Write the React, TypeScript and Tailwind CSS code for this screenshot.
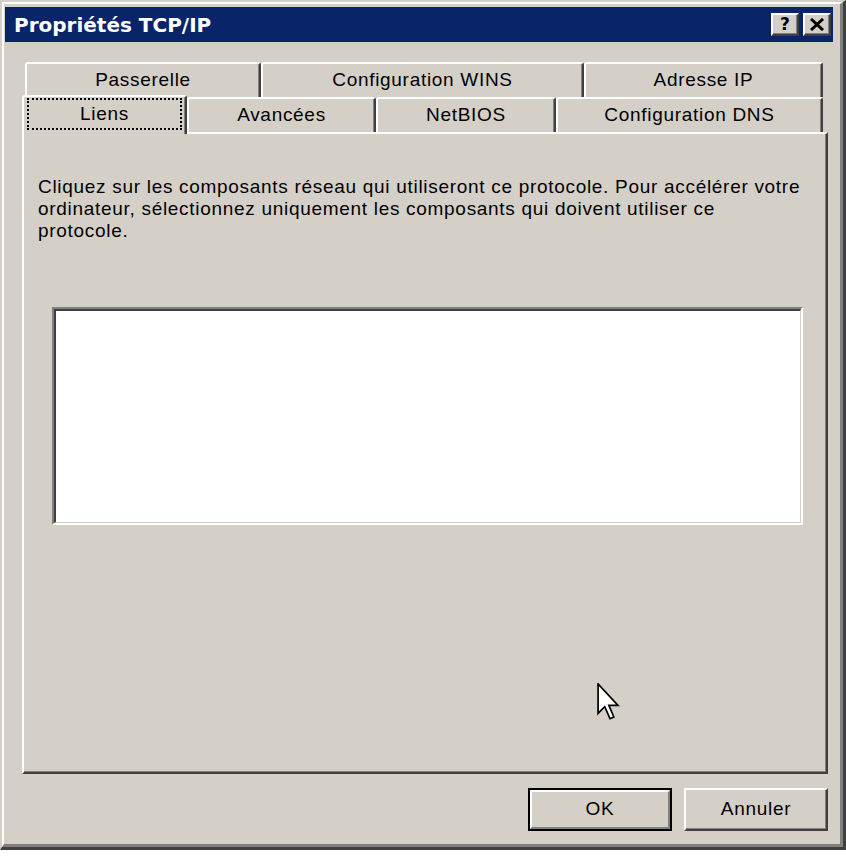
const backRow = [
  { label: "Passerelle", w: "w-[236px]" },
  { label: "Configuration WINS", w: "w-[323px]" },
  { label: "Adresse IP", w: "w-[239px]" },
];

const frontRow = [
  { label: "Avancées", w: "w-[189px]" },
  { label: "NetBIOS", w: "w-[180px]" },
  { label: "Configuration DNS", w: "w-[267px]" },
];

function Tab({ label, w }: { label: string; w: string }) {
  return (
    <div
      className={`${w} flex h-[35px] items-center justify-center rounded-t-[3px] border-t-2 border-r-2 border-l-2 border-t-white border-r-[#404040] border-l-white shadow-[inset_-1px_0_0_#808080]`}
    >
      {label}
    </div>
  );
}

export default function App() {
  return (
    <div
      className="h-[856px] w-[846px] bg-white text-[19px] tracking-[0.7px] text-black"
      style={{ fontFamily: '"Liberation Sans", Arial, sans-serif' }}
    >
      {/* Window frame */}
      <div className="h-[850px] w-[846px] border-t-2 border-r-[3px] border-b-[3px] border-l-2 border-t-[#d4d0c8] border-r-[#404040] border-b-[#404040] border-l-[#d4d0c8]">
        <div className="flex h-full flex-col border-t-2 border-r-[3px] border-b-[3px] border-l-2 border-t-white border-r-[#808080] border-b-[#808080] border-l-white bg-[#d4d0c8] pt-[3px] pr-[7px] pl-[1px]">
          {/* Title bar */}
          <div className="flex h-[35px] w-[828px] items-center bg-[#0a246a] pr-[2px] pl-[9px]">
            <span
              className="flex-1 text-[20px] font-bold tracking-normal text-white"
              style={{ fontFamily: '"DejaVu Sans", Verdana, sans-serif' }}
            >
              Propriétés TCP/IP
            </span>
            <div className="flex gap-[4px]">
              <div className="flex h-[23px] w-[28px] items-center justify-center border-t-2 border-r-2 border-b-2 border-l-2 border-t-white border-r-[#404040] border-b-[#404040] border-l-white bg-[#d4d0c8] shadow-[inset_-1px_-1px_0_#808080]">
                <span
                  className="text-[17px] leading-none font-bold tracking-normal"
                  style={{ fontFamily: '"DejaVu Sans", Verdana, sans-serif' }}
                >
                  ?
                </span>
              </div>
              <div className="flex h-[23px] w-[28px] items-center justify-center border-t-2 border-r-2 border-b-2 border-l-2 border-t-white border-r-[#404040] border-b-[#404040] border-l-white bg-[#d4d0c8] shadow-[inset_-1px_-1px_0_#808080]">
                <svg width="16" height="13" viewBox="0 0 16 13">
                  <path d="M2 1 L14 12 M14 1 L2 12" stroke="black" strokeWidth="3" />
                </svg>
              </div>
            </div>
          </div>

          {/* Tabs */}
          <div className="mt-[20px] flex flex-col">
            <div className="ml-[20px] flex">
              {backRow.map((t) => (
                <Tab key={t.label} label={t.label} w={t.w} />
              ))}
            </div>
            <div className="ml-[17px] flex items-start">
              <div className="relative z-10 -mt-[2px] -mb-[2px] h-[39px] w-[165px] rounded-t-[3px] border-t-2 border-r-2 border-l-2 border-t-white border-r-[#404040] border-l-white bg-[#d4d0c8] shadow-[inset_-1px_0_0_#808080]">
                <div className="mt-[1px] ml-[3px] flex h-[32px] w-[155px] items-center justify-center border-2 border-dotted border-black">
                  Liens
                </div>
              </div>
              {frontRow.map((t) => (
                <Tab key={t.label} label={t.label} w={t.w} />
              ))}
            </div>
          </div>

          {/* Panel */}
          <div className="ml-[17px] flex h-[642px] w-[806px] flex-col border-t-2 border-r-2 border-b-2 border-l-2 border-t-white border-r-[#404040] border-b-[#404040] border-l-white shadow-[inset_-1px_-1px_0_#808080]">
            <p className="mt-[42px] ml-[14px] leading-[22px] whitespace-nowrap">
              Cliquez sur les composants réseau qui utiliseront ce protocole. Pour accélérer votre
              <br />
              ordinateur, sélectionnez uniquement les composants qui doivent utiliser ce
              <br />
              protocole.
            </p>
            <div className="mt-[65px] ml-[28px] h-[218px] w-[751px] border-t-2 border-r-2 border-b-2 border-l-2 border-t-[#808080] border-r-white border-b-white border-l-[#808080]">
              <div className="h-full w-full border-t-2 border-r border-b border-l-2 border-t-[#404040] border-r-[#d4d0c8] border-b-[#d4d0c8] border-l-[#404040] bg-white" />
            </div>
          </div>

          {/* Buttons */}
          <div className="mt-[14px] flex justify-end gap-[12px] pr-[5px]">
            <button className="h-[43px] w-[144px] border-2 border-black bg-[#d4d0c8]">
              <div className="flex h-full w-full items-center justify-center border-t-2 border-r-2 border-b-2 border-l-2 border-t-white border-r-[#808080] border-b-[#808080] border-l-white">
                OK
              </div>
            </button>
            <button className="flex h-[43px] w-[144px] items-center justify-center border-t-2 border-r-2 border-b-2 border-l-2 border-t-white border-r-[#404040] border-b-[#404040] border-l-white bg-[#d4d0c8] shadow-[inset_-1px_-1px_0_#808080]">
              Annuler
            </button>
          </div>
        </div>
      </div>

      {/* Mouse pointer */}
      <svg
        className="pointer-events-none absolute top-[683px] left-[597px]"
        width="23"
        height="37"
        viewBox="0 0 12 19.5"
      >
        <path
          d="M0.5 0.5 L0.5 16 L4 12.5 L6.8 18.8 L8.8 17.9 L6.2 11.8 L11 11.8 Z"
          fill="white"
          stroke="black"
          strokeWidth="0.9"
          strokeLinejoin="miter"
        />
      </svg>
    </div>
  );
}
